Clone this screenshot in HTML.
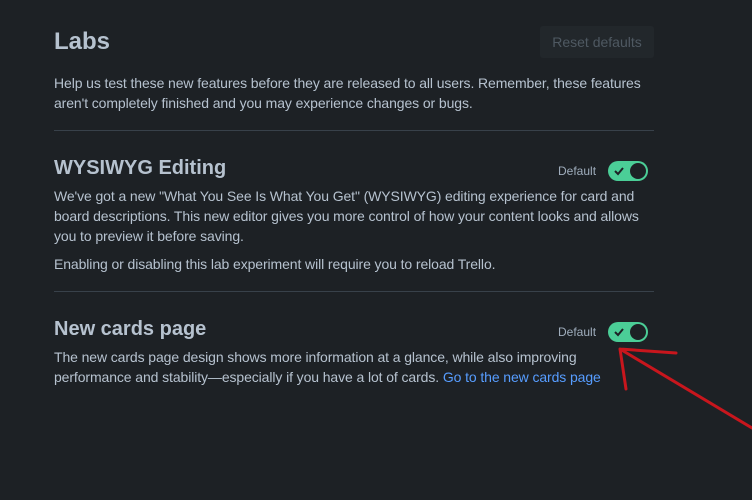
<!DOCTYPE html>
<html><head><style>
body{margin:0;width:752px;height:500px;background:#1d2125;font-family:"Liberation Sans",sans-serif;color:#b6c2cf;position:relative;overflow:hidden}
.a{position:absolute;white-space:nowrap}
.p{font-size:14px;line-height:20px;letter-spacing:-0.1px}
.h{font-size:20px;font-weight:bold;color:#b6c2cf}
.hr{position:absolute;left:54px;width:600px;height:1px;background:#38414a}
.tg{position:absolute;width:40px;height:20px;border-radius:10px;background:#4bce97}
.tg .k{position:absolute;right:2px;top:2px;width:16px;height:16px;border-radius:50%;background:#1d2125}
.tg svg{position:absolute;left:5px;top:4px}
.def{font-size:12px;color:#9fadbc}
</style></head><body>
<div class="a" style="left:54px;top:28px;font-size:24px;font-weight:bold">Labs</div>
<div class="a" style="left:540px;top:26px;width:114px;height:32px;background:#22272b;border-radius:3px;color:#4f5962;font-size:14px;line-height:32px;text-align:center">Reset defaults</div>
<div class="a p" style="left:54px;top:73px">Help us test these new features before they are released to all users. Remember, these features<br>aren't completely finished and you may experience changes or bugs.</div>
<div class="hr" style="top:130px"></div>
<div class="a h" style="left:54px;top:157px">WYSIWYG Editing</div>
<div class="a def" style="left:558px;top:164px">Default</div>
<div class="tg" style="left:608px;top:161px"><svg width="12" height="12" viewBox="0 0 12 12"><path d="M2 6l3 3 5-6" stroke="#1d2125" stroke-width="2" fill="none"/></svg><div class="k"></div></div>
<div class="a p" style="left:54px;top:186px">We've got a new "What You See Is What You Get" (WYSIWYG) editing experience for card and<br>board descriptions. This new editor gives you more control of how your content looks and allows<br>you to preview it before saving.</div>
<div class="a p" style="left:54px;top:254px">Enabling or disabling this lab experiment will require you to reload Trello.</div>
<div class="hr" style="top:291px"></div>
<div class="a h" style="left:54px;top:318px">New cards page</div>
<div class="a def" style="left:558px;top:325px">Default</div>
<div class="tg" style="left:608px;top:322px"><svg width="12" height="12" viewBox="0 0 12 12"><path d="M2 6l3 3 5-6" stroke="#1d2125" stroke-width="2" fill="none"/></svg><div class="k"></div></div>
<div class="a p" style="left:54px;top:347px">The new cards page design shows more information at a glance, while also improving<br>performance and stability—especially if you have a lot of cards. <span style="color:#579dff">Go to the new cards page</span></div>
<svg class="a" style="left:0;top:0" width="752" height="500"><path d="M676 353L620 349L752 428M620 349L626 389" stroke="#c8161d" stroke-width="3" fill="none" stroke-linecap="round"/></svg>
</body></html>
